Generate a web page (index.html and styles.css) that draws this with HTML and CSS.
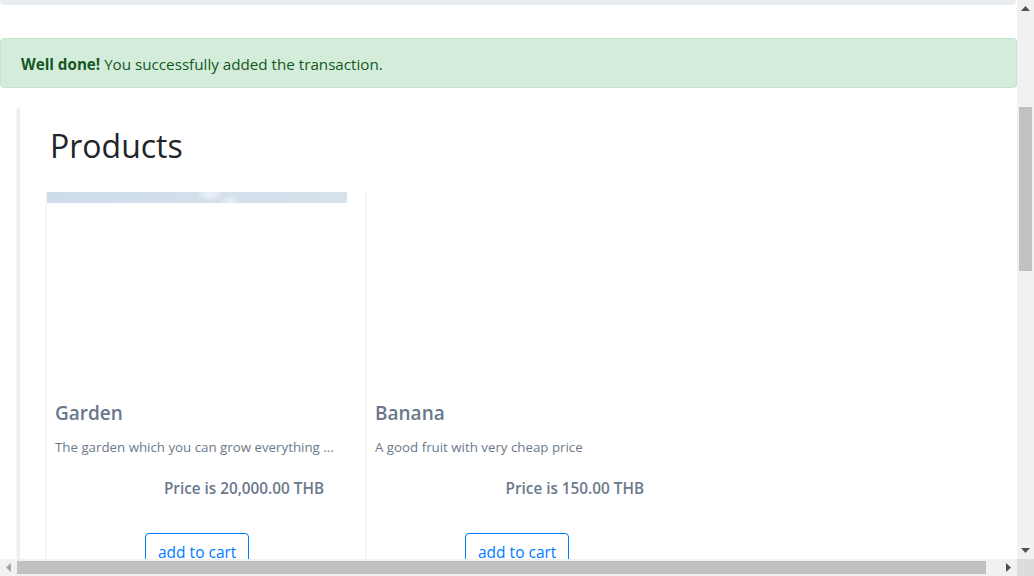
FILE: index.html
```html
<!DOCTYPE html>
<html lang="en">
<head>
<meta charset="utf-8">
<title>Products</title>
<link rel="stylesheet" href="styles.css">
</head>
<body>
<div class="window">
  <div class="viewport">
    <div class="page">
      <div class="topbar"></div>
      <div class="alert"><strong>Well done!</strong> You successfully added the transaction.</div>
      <section class="panel">
        <h2 class="title">Products</h2>
        <div class="cards">
          <article class="card">
            <div class="thumb"><div class="strip"></div></div>
            <div class="card-body">
              <h5 class="card-title">Garden</h5>
              <p class="desc">The garden which you can grow everything ...</p>
              <p class="price">Price is 20,000.00 THB</p>
              <div class="actions"><button class="btn">add to cart</button></div>
            </div>
          </article>
          <article class="card">
            <div class="thumb"></div>
            <div class="card-body">
              <h5 class="card-title">Banana</h5>
              <p class="desc">A good fruit with very cheap price</p>
              <p class="price">Price is 150.00 THB</p>
              <div class="actions"><button class="btn">add to cart</button></div>
            </div>
          </article>
        </div>
      </section>
    </div>
  </div>
  <div class="vscroll">
    <div class="arrow-box"><svg width="9" height="5" viewBox="0 0 9 5"><polygon points="0,5 9,5 4.5,0" fill="#505050"/></svg></div>
    <div class="vthumb"></div>
    <div class="arrow-box end"><svg width="9" height="5" viewBox="0 0 9 5"><polygon points="0,0 9,0 4.5,5" fill="#505050"/></svg></div>
  </div>
  <div class="hscroll">
    <div class="arrow-box"><svg width="5" height="9" viewBox="0 0 5 9"><polygon points="5,0 5,9 0,4.5" fill="#a3a3a3"/></svg></div>
    <div class="hthumb"></div>
    <div class="arrow-box end"><svg width="5" height="9" viewBox="0 0 5 9"><polygon points="0,0 0,9 5,4.5" fill="#505050"/></svg></div>
  </div>
  <div class="corner"></div>
</div>
</body>
</html>
```
FILE: styles.css
```css
* { box-sizing: border-box; }
html, body { margin: 0; padding: 0; }
body {
  width: 1034px;
  height: 576px;
  overflow: hidden;
  background: #fff;
  font-family: "Open Sans", "Noto Sans", sans-serif;
  color: #212529;
}
.window {
  display: grid;
  grid-template-columns: 1017px 17px;
  grid-template-rows: 559px 17px;
  width: 1034px;
  height: 576px;
}
.viewport {
  overflow: hidden;
  background: #fff;
}
.page {
  width: 1032px;
}
.topbar {
  height: 5px;
  width: 1016px;
  background: #e9ecef;
  border-radius: 0 0 5px 5px;
}
.alert {
  margin-top: 33px;
  width: 1017px;
  padding: 13px 20px 11px;
  border: 1px solid #c3e6cb;
  border-radius: 4px;
  background: #d4edda;
  color: #155724;
  font-size: 15.2px;
  line-height: 24px;
}
.alert strong { font-weight: 700; }
.panel {
  margin-top: 20px;
  margin-left: 17px;
  padding: 19px 0 40px 26px;
  border-left: 3px solid #eceff5;
  box-shadow: -1px 0 2px rgba(0, 0, 0, 0.05);
}
.title {
  margin: 0 0 27px 4px;
  font-size: 32px;
  font-weight: 500;
  line-height: 38.4px;
  color: #212529;
}
.cards {
  display: flex;
  gap: 19px;
}
.card {
  width: 301px;
  border-left: 1px solid #f3f3f5;
  box-shadow: -1px 0 2px rgba(0, 0, 0, 0.03);
}
.thumb {
  height: 200px;
  background: #fff;
}
.strip {
  height: 11px;
  background:
    radial-gradient(ellipse 14px 8px at 163px 2px, rgba(255,255,255,0.65), rgba(255,255,255,0) 100%),
    radial-gradient(ellipse 10px 6px at 183px 9px, rgba(255,255,255,0.5), rgba(255,255,255,0) 100%),
    linear-gradient(90deg, #cfdcea 0%, #d3e0ec 60%, #d5e2ec 100%);
}
.card-body {
  padding: 9px 8px 0 8px;
  color: #68788c;
}
.card-title {
  margin: 0 0 12px;
  font-size: 19px;
  font-weight: 600;
  line-height: 24px;
  color: #68788c;
}
.desc {
  margin: 0 0 18px;
  font-size: 13.3px;
  line-height: 21px;
  color: #6c7a8a;
  white-space: nowrap;
}
.price {
  margin: 0 0 33px;
  padding-right: 15px;
  text-align: right;
  font-size: 15.3px;
  font-weight: 600;
  line-height: 24px;
  color: #6a798c;
}
.actions {
  text-align: center;
  margin-left: -8px;
  margin-right: -8px;
}
.btn {
  font-family: inherit;
  font-size: 15.5px;
  line-height: 24px;
  padding: 6px 12px;
  color: #007bff;
  background: #fff;
  border: 1px solid #007bff;
  border-radius: 4px;
  width: 104px;
  white-space: nowrap;
}
.vscroll {
  background: #f1f1f1;
  display: flex;
  flex-direction: column;
  align-items: center;
}
.vscroll .arrow-box {
  height: 17px;
  width: 17px;
  display: flex;
  align-items: center;
  justify-content: center;
}
.vscroll .arrow-box.end { margin-top: auto; }
.vthumb {
  margin-top: 90px;
  width: 13px;
  height: 164px;
  background: #c1c1c1;
}
.hscroll {
  background: #f1f1f1;
  display: flex;
  align-items: center;
}
.hscroll .arrow-box {
  width: 17px;
  height: 17px;
  display: flex;
  align-items: center;
  justify-content: center;
}
.hscroll .arrow-box.end { margin-left: auto; }
.hthumb {
  width: 969px;
  height: 13px;
  background: #c1c1c1;
}
.corner {
  background: #dcdcdc;
}
```
